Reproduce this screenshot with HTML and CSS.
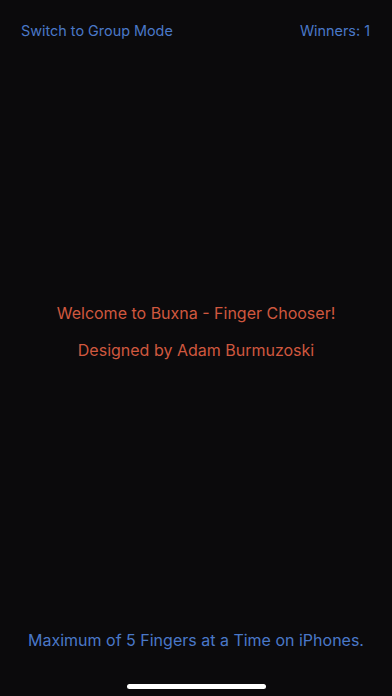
FILE: index.html
```html
<!DOCTYPE html>
<html lang="en">
<head>
<meta charset="utf-8">
<title>Buxna - Finger Chooser</title>
<link rel="stylesheet" href="styles.css">
</head>
<body>
<div class="screen">
  <header class="topbar">
    <span class="link">Switch to Group Mode</span>
    <span class="link">Winners: 1</span>
  </header>
  <main class="center">
    <p class="welcome">Welcome to Buxna - Finger Chooser!</p>
    <p class="welcome">Designed by Adam Burmuzoski</p>
  </main>
  <footer class="footer">
    <p class="note">Maximum of 5 Fingers at a Time on iPhones.</p>
    <div class="home-indicator"></div>
  </footer>
</div>
</body>
</html>
```
FILE: styles.css
```css
html, body {
  margin: 0;
  padding: 0;
  background: #0b0a0c;
}
.screen {
  width: 392px;
  height: 696px;
  display: flex;
  flex-direction: column;
  font-family: Inter, "Noto Sans", sans-serif;
  -webkit-font-smoothing: antialiased;
}
.topbar {
  height: 62px;
  display: flex;
  justify-content: space-between;
  align-items: center;
  padding: 0 22px 0 21px;
  box-sizing: border-box;
}
.link {
  color: #4a78c8;
  font-size: 14.4px;
  line-height: 20px;
}
.center {
  flex: 1;
  display: flex;
  flex-direction: column;
  align-items: center;
  justify-content: center;
  gap: 17px;
  padding-bottom: 24px;
}
.welcome {
  margin: 0;
  color: #d0583f;
  font-size: 16px;
  line-height: 20px;
}
.footer {
  display: flex;
  flex-direction: column;
  align-items: center;
  padding-bottom: 7px;
}
.note {
  margin: 6px 0 0 0;
  color: #4a78c8;
  font-size: 16px;
  line-height: 20px;
}
.home-indicator {
  margin-top: 34px;
  width: 139px;
  height: 5px;
  border-radius: 3px;
  background: #ffffff;
}
```
